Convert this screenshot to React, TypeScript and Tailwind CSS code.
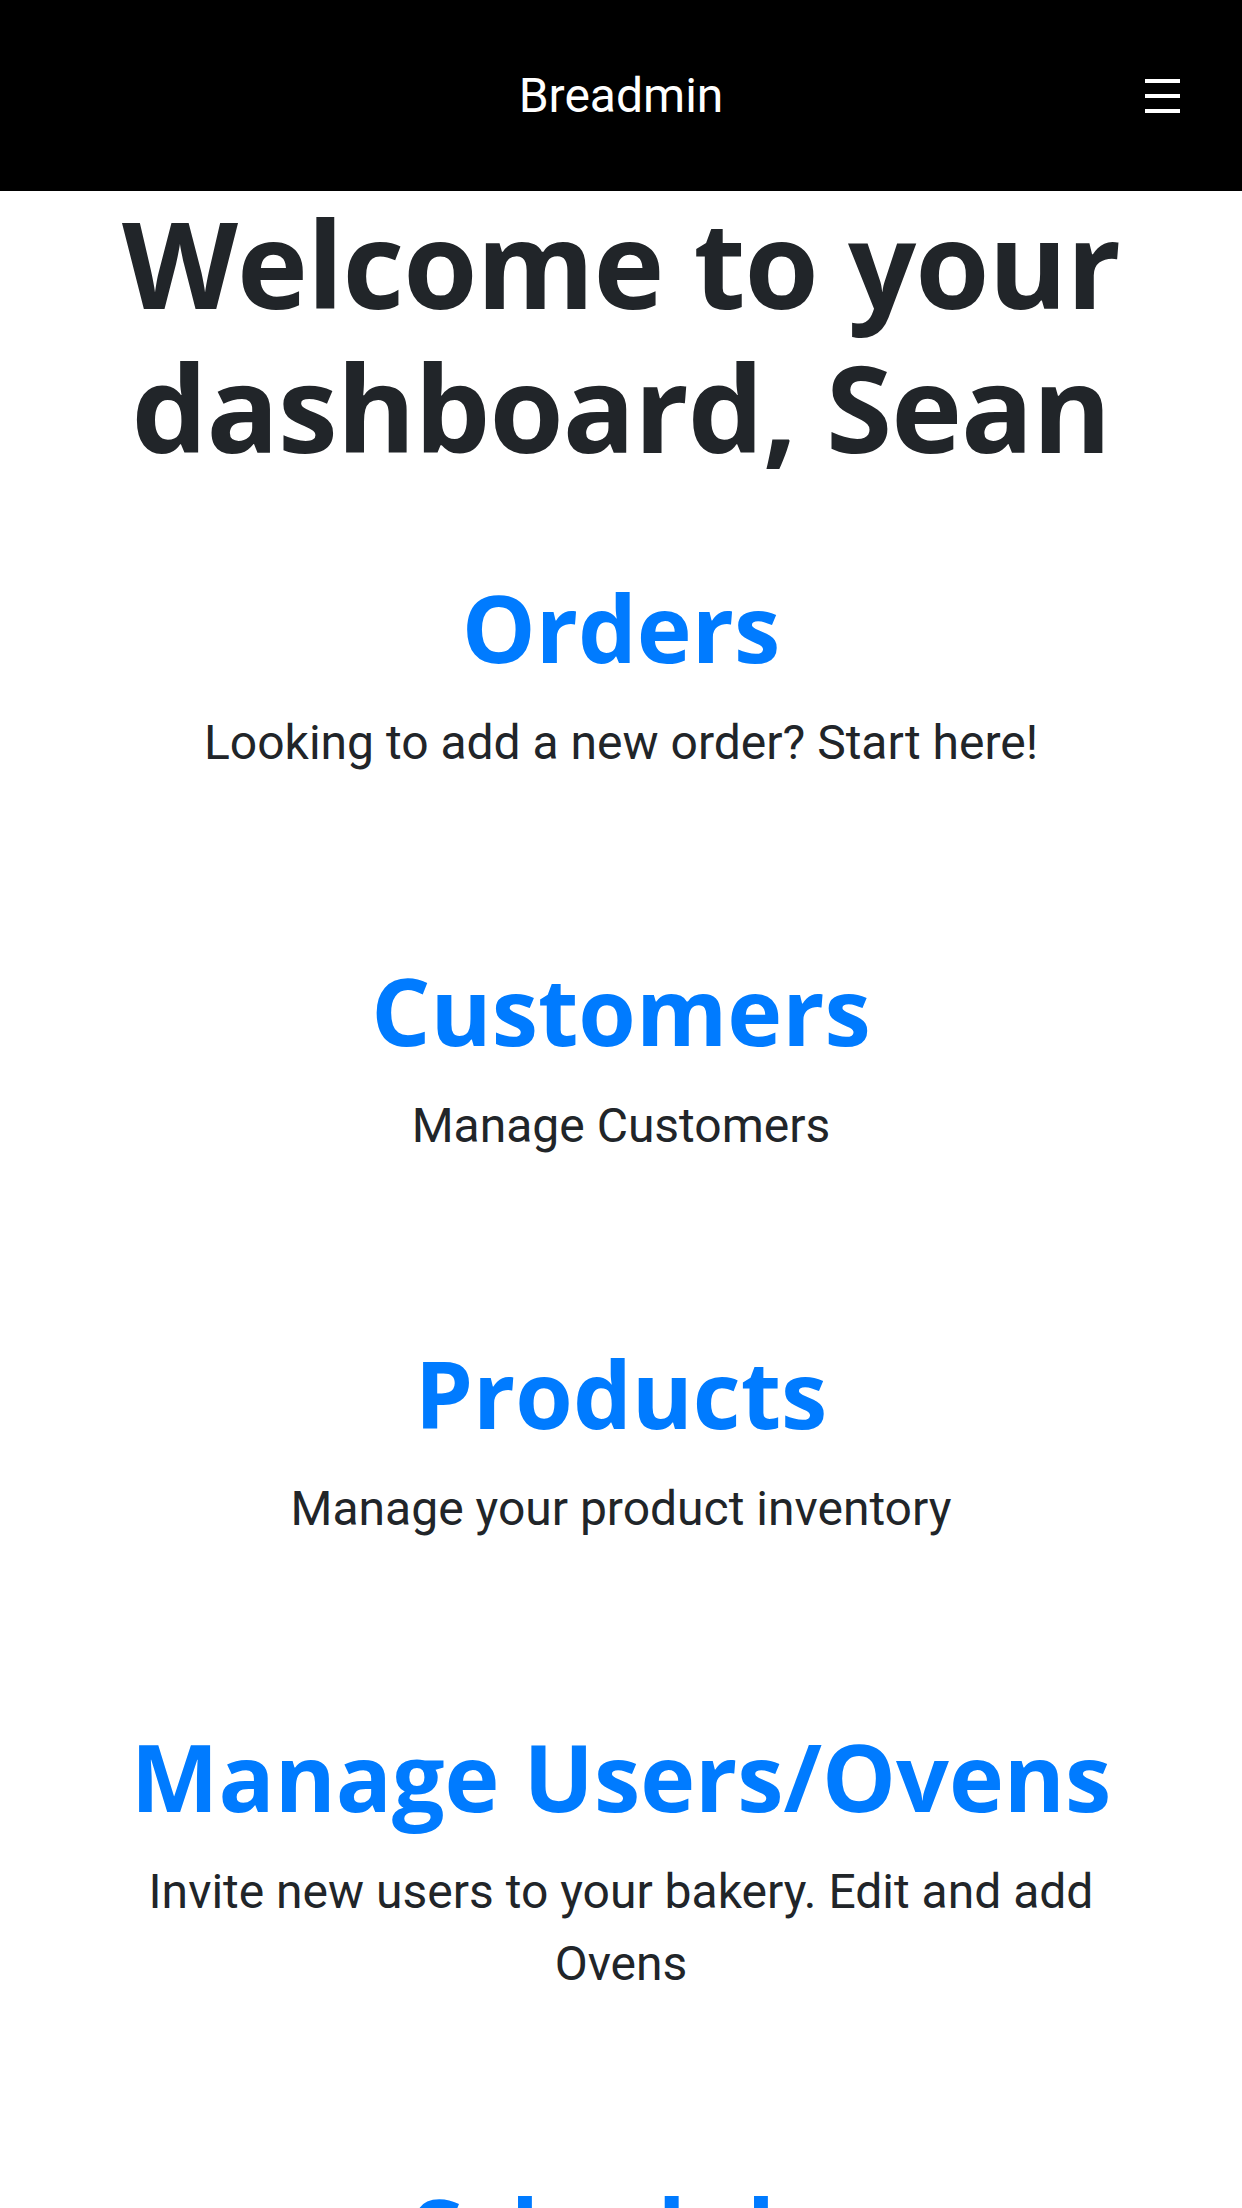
import React from "react";

const SECTIONS = [
  { title: "Orders", text: "Looking to add a new order? Start here!" },
  { title: "Customers", text: "Manage Customers" },
  { title: "Products", text: "Manage your product inventory" },
  { title: "Manage Users/Ovens", text: "Invite new users to your bakery. Edit and add Ovens" },
  { title: "Schedule", text: "View the baking schedule" },
];

const HEAD_FONT = "font-['Open_Sans',_'Noto_Sans',_sans-serif]";

function Navbar() {
  return (
    <nav className="relative flex h-[191px] items-center justify-center bg-black">
      <span className="text-[48px] leading-none text-white">Breadmin</span>
      {/* hamburger */}
      <button className="absolute right-[62px] top-[79px] flex w-[35px] flex-col gap-[11px]">
        <span className="h-[4px] w-full bg-white" />
        <span className="h-[4px] w-full bg-white" />
        <span className="h-[4px] w-full bg-white" />
      </button>
    </nav>
  );
}

export default function App() {
  return (
    <div className="min-h-screen bg-white font-['Roboto',_sans-serif] text-[#212529]">
      <Navbar />
      <main className="px-[45px] text-center">
        <h1 className={`${HEAD_FONT} text-[120px] font-bold leading-[144px] tracking-[-1px]`}>
          Welcome to your dashboard, Sean
        </h1>
        <div className="mt-[91px] px-[45px]">
          {SECTIONS.map((s) => (
            <section key={s.title} className="pb-[174px]">
              <h2 className={`${HEAD_FONT} text-[93px] font-bold leading-[115px] text-[#007bff]`}>
                {s.title}
              </h2>
              <p className="mt-[22px] text-[48px] leading-[72px]">{s.text}</p>
            </section>
          ))}
        </div>
      </main>
    </div>
  );
}
